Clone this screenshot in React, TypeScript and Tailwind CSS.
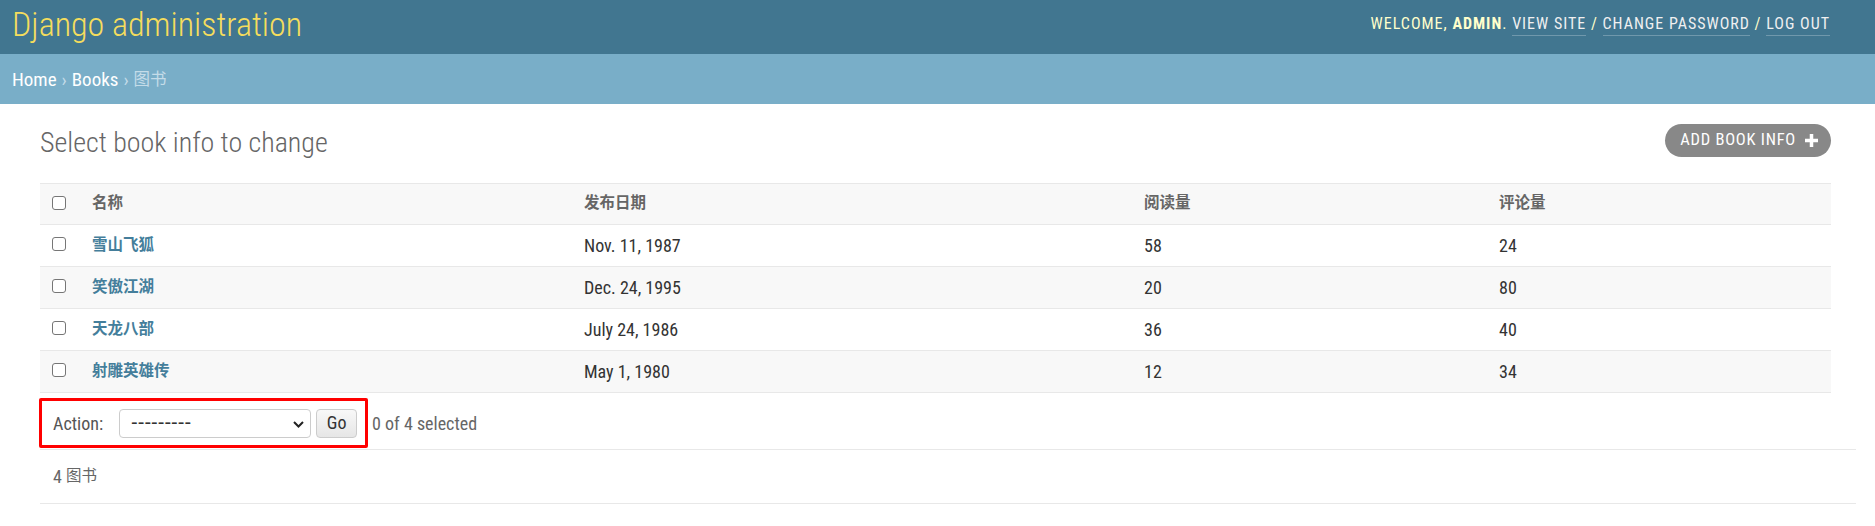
const books = [
  { name: "雪山飞狐", date: "Nov. 11, 1987", reads: 58, comments: 24 },
  { name: "笑傲江湖", date: "Dec. 24, 1995", reads: 20, comments: 80 },
  { name: "天龙八部", date: "July 24, 1986", reads: 36, comments: 40 },
  { name: "射雕英雄传", date: "May 1, 1980", reads: 12, comments: 34 },
];

function Checkbox() {
  return (
    <input
      type="checkbox"
      className="appearance-none w-[14px] h-[14px] rounded-[3px] border-[1.5px] border-[#767676] bg-white"
    />
  );
}

export default function App() {
  return (
    <div className="min-h-[526px] bg-white font-['Roboto','Noto_Sans_CJK_SC',sans-serif] [font-stretch:condensed] text-[#333]">
      {/* header */}
      <header className="h-[54px] bg-[#417690] flex items-start justify-between pl-[12px] pr-[45px] pt-[4px]">
        <h1 className="text-[34px] leading-[40px] font-light text-[#f5dd5d]">
          Django administration
        </h1>
        <div className="text-[16px] leading-[40px] tracking-[1px] uppercase text-[#ffc]">
          Welcome, <strong className="font-bold">admin</strong>.{" "}
          <a className="text-[#f0f0f0] border-b border-white/25 pb-[2px]">View site</a> /{" "}
          <a className="text-[#f0f0f0] border-b border-white/25 pb-[2px]">Change password</a> /{" "}
          <a className="text-[#f0f0f0] border-b border-white/25 pb-[2px]">Log out</a>
        </div>
      </header>

      {/* breadcrumbs */}
      <div className="h-[50px] bg-[#79aec8] flex items-center pl-[12px] pt-[2px] text-[19px] text-[#c4dce8]">
        <a className="text-white">Home</a>
        <span className="mx-[5px] text-[#c4dce8]">›</span>
        <a className="text-white">Books</a>
        <span className="mx-[5px] text-[#c4dce8]">›</span>
        <span className="text-[16.5px]">图书</span>
      </div>

      {/* content */}
      <div className="pl-[40px] pr-[19px]">
        <div className="mr-[25px] mt-[20px] mb-[26px] h-[33px] flex items-center justify-between">
          <h1 className="text-[28px] font-light text-[#666] leading-[34px] mt-[4px]">
            Select book info to change
          </h1>
          <a className="h-[33px] rounded-full bg-[#888] text-white flex items-center gap-[8px] pl-[15px] pr-[12px] text-[16.5px] tracking-[0.75px] uppercase">
            Add book info
            <svg width="15" height="15" viewBox="0 0 15 15" className="mb-[1px]">
              <path d="M7.5 1v13M1 7.5h13" stroke="white" strokeWidth="3.5" />
            </svg>
          </a>
        </div>

        {/* results table */}
        <div className="mr-[25px]">
          <div className="grid grid-cols-[40px_492px_560px_355px_1fr] h-[42px] items-center bg-[#f8f8f8] border-y border-[#e8e8e8] text-[15.5px] font-semibold text-[#666]">
            <div className="pl-[12px] flex items-center -mt-[3px]">
              <Checkbox />
            </div>
            <div className="pl-[12px]">名称</div>
            <div className="pl-[12px]">发布日期</div>
            <div className="pl-[12px]">阅读量</div>
            <div className="pl-[12px]">评论量</div>
          </div>
          {books.map((b, i) => (
            <div
              key={b.name}
              className={
                "grid grid-cols-[40px_492px_560px_355px_1fr] h-[42px] items-center border-b border-[#e8e8e8] text-[18px] " +
                (i % 2 === 1 ? "bg-[#f8f8f8]" : "bg-white")
              }
            >
              <div className="pl-[12px] flex items-center -mt-[3px]">
                <Checkbox />
              </div>
              <div className="pl-[12px] text-[15.5px] font-semibold text-[#447e9b]">
                <a>{b.name}</a>
              </div>
              <div className="pl-[12px]">{b.date}</div>
              <div className="pl-[12px]">{b.reads}</div>
              <div className="pl-[12px]">{b.comments}</div>
            </div>
          ))}
        </div>

        {/* actions */}
        <div className="h-[57px] pt-[5px] border-b border-[#e8e8e8] flex items-start text-[18px]">
          <div className="-ml-[1px] h-[50px] w-[329px] border-[3px] border-[#ff0000] rounded-[2px] flex items-center pl-[11px]">
            <label className="text-[#555] mr-[16px]">Action:</label>
            <div className="relative w-[192px] h-[29px] border border-[#ccc] rounded-[4px] bg-white flex items-center pl-[11px] text-[#333]">
              <span className="font-['Liberation_Sans',sans-serif] [font-stretch:normal] text-[20px] leading-none -mt-[2px]">
                ---------
              </span>
              <svg
                width="11"
                height="7"
                viewBox="0 0 11 7"
                className="absolute right-[6px] top-[11px]"
              >
                <path d="M1 1l4.5 4.5L10 1" fill="none" stroke="#222" strokeWidth="2" />
              </svg>
            </div>
            <button className="ml-[5px] w-[41px] h-[29px] border border-[#ccc] rounded-[4px] bg-gradient-to-b from-[#f8f8f8] to-[#e6e6e6] text-[#333] text-[18px] leading-none">
              Go
            </button>
          </div>
          <span className="ml-[4px] h-[50px] flex items-center text-[#666]">0 of 4 selected</span>
        </div>

        {/* paginator */}
        <div className="h-[54px] border-b border-[#e8e8e8] flex items-center pl-[13px] text-[18px] text-[#666]">
          4 <span className="ml-[4px] text-[15.5px]">图书</span>
        </div>
      </div>
    </div>
  );
}
